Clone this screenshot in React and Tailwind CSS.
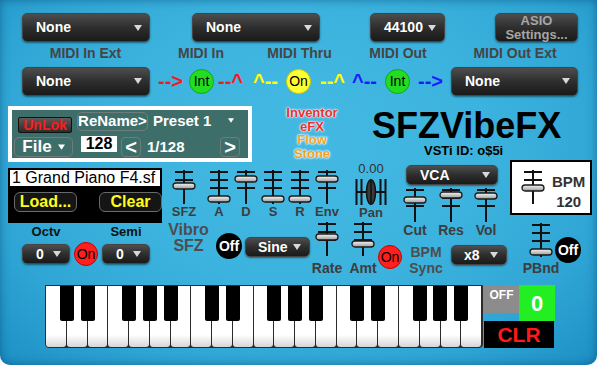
import React from "react";

function Tri({ color = "#d9d9d9", w = 8, h = 6 }) {
  return (
    <svg width={w} height={h} viewBox="0 0 8 6">
      <polygon points="0,0 8,0 4,6" fill={color} />
    </svg>
  );
}

function Drop({ label, className = "" }) {
  return (
    <div
      className={`flex items-center justify-between rounded-[5px] border border-[#454545] bg-gradient-to-b from-[#4e4e4e] via-[#2e2e2e] to-[#1a1a1a] shadow-[0_1px_2px_rgba(0,0,0,0.45)] font-bold text-white ${className}`}
    >
      <span>{label}</span>
      <Tri />
    </div>
  );
}

function Dot({ label, className = "" }) {
  return (
    <div className={`flex shrink-0 items-center justify-center rounded-full ${className}`}>
      {label}
    </div>
  );
}

function Arrow({ text, className = "" }) {
  return <span className={`text-[20px] font-bold leading-none ${className}`}>{text}</span>;
}

function Slider({ knob = 29 }) {
  return (
    <svg width="24" height="34" viewBox="0 0 24 34">
      <line x1="12" y1="0" x2="12" y2="34" stroke="#111" strokeWidth="2" />
      <line x1="3" y1="2" x2="21" y2="2" stroke="#111" strokeWidth="2" />
      <line x1="3" y1="10" x2="21" y2="10" stroke="#111" strokeWidth="2" />
      <line x1="3" y1="18" x2="21" y2="18" stroke="#111" strokeWidth="2" />
      <rect
        x="1"
        y={knob - 3}
        width="22"
        height="6"
        rx="3"
        fill="url(#knobGrad)"
        stroke="#1a1a1a"
        strokeWidth="1.3"
      />
    </svg>
  );
}

function SliderItem({ knob, label, className = "", labelCls = "text-[13px]" }) {
  return (
    <div className={`flex w-[24px] flex-col items-center ${className}`}>
      <Slider knob={knob} />
      <span className={`whitespace-nowrap font-bold leading-[16px] text-[#3d3d3d] ${labelCls}`}>
        {label}
      </span>
    </div>
  );
}

function PanKnob() {
  return (
    <svg width="32" height="26" viewBox="0 0 32 26">
      {[1.5, 6.5, 25.5, 30.5].map((x) => (
        <line key={x} x1={x} y1="0" x2={x} y2="26" stroke="#111" strokeWidth="2" />
      ))}
      <line x1="1" y1="13" x2="31" y2="13" stroke="#111" strokeWidth="2" />
      <ellipse cx="16" cy="13" rx="4.5" ry="12.3" fill="#3a3a3a" stroke="#111" strokeWidth="1.5" />
      <line x1="16" y1="2" x2="16" y2="24" stroke="#111" strokeWidth="1.5" />
    </svg>
  );
}

function Keyboard() {
  const kw = 436 / 21;
  const blacks = [];
  for (let o = 0; o < 3; o++) [1, 2, 4, 5, 6].forEach((b) => blacks.push(o * 7 + b));
  return (
    <div className="relative flex h-[63px] w-[438px] rounded-b-[4px] border border-[#2b2b2b] bg-[#2b2b2b]">
      {Array.from({ length: 21 }).map((_, i) => (
        <div
          key={i}
          className="mr-[1px] flex-1 rounded-b-[3px] bg-gradient-to-b from-white from-80% to-[#d6d6d6] last:mr-0"
        />
      ))}
      {blacks.map((b) => (
        <div
          key={b}
          className="absolute top-0 h-[35px] w-[14px] rounded-b-[2px] bg-black"
          style={{ left: b * kw - 7 }}
        />
      ))}
    </div>
  );
}

const outline = "[text-shadow:0_0_1px_#fff,0_0_2px_#fff,0_0_3px_#fff]";

export default function App() {
  return (
    <div className="h-[367px] w-[600px] bg-white font-['Liberation_Sans',Arial,sans-serif]">
      <svg width="0" height="0" className="absolute">
        <defs>
          <linearGradient id="knobGrad" x1="0" y1="0" x2="0" y2="1">
            <stop offset="0" stopColor="#f6f6f6" />
            <stop offset="1" stopColor="#9c9c9c" />
          </linearGradient>
        </defs>
      </svg>

      <div className="h-[365px] w-[597px] overflow-hidden rounded-b-[10px] bg-[radial-gradient(ellipse_at_50%_40%,#43b9e2_0%,#3cb3de_45%,#2ea5d4_75%,#1d8fc4_100%)] shadow-[inset_0_0_10px_rgba(0,60,110,0.5)]">
        {/* top row */}
        <div className="flex pl-[22px] pt-[13px]">
          <Drop label="None" className="h-[29px] w-[128px] pl-[13px] pr-[7px] text-[14px]" />
          <Drop label="None" className="ml-[42px] h-[29px] w-[128px] pl-[13px] pr-[7px] text-[14px]" />
          <Drop label="44100" className="ml-[50px] h-[29px] w-[75px] pl-[13px] pr-[8px] text-[14px]" />
          <div className="ml-[50px] flex h-[29px] w-[83px] flex-col items-center justify-center rounded-[5px] border border-[#454545] bg-gradient-to-b from-[#4e4e4e] via-[#2e2e2e] to-[#1a1a1a] text-[13px] font-bold leading-[14px] text-[#a6a6a6] shadow-[0_1px_2px_rgba(0,0,0,0.45)]">
            <span>ASIO</span>
            <span>Settings...</span>
          </div>
        </div>

        {/* midi labels */}
        <div className="flex h-[22px] items-center pl-[20px] text-[14px] font-bold text-[#454545]">
          <div className="w-[131px] text-center">MIDI In Ext</div>
          <div className="w-[100px] text-center">MIDI In</div>
          <div className="w-[97px] text-center">MIDI Thru</div>
          <div className="w-[100px] text-center">MIDI Out</div>
          <div className="w-[134px] text-center">MIDI Out Ext</div>
        </div>

        {/* routing row */}
        <div className="mt-[2px] flex h-[30px] items-center pl-[22px]">
          <Drop label="None" className="h-[29px] w-[128px] pl-[13px] pr-[7px] text-[14px]" />
          <Arrow text="-->" className="ml-[8px] text-[#f01c1c]" />
          <Dot label="Int" className="ml-[6px] h-[25px] w-[25px] border border-[#17a517] bg-[#22dd22] text-[14px] text-black" />
          <Arrow text="--^" className="ml-[4px] text-[#f01c1c]" />
          <Arrow text="^--" className="ml-[10px] text-[#ffff00]" />
          <Dot label="On" className="ml-[8px] h-[25px] w-[25px] border border-[#cccc00] bg-[#ffff33] text-[14px] text-black" />
          <Arrow text="--^" className="ml-[9px] text-[#ffff00]" />
          <Arrow text="^--" className="ml-[7px] text-[#1a1aff]" />
          <Dot label="Int" className="ml-[8px] h-[25px] w-[25px] border border-[#17a517] bg-[#22dd22] text-[14px] text-black" />
          <Arrow text="-->" className="ml-[8px] text-[#1a1aff]" />
          <Drop label="None" className="ml-[8px] h-[29px] w-[127px] pl-[13px] pr-[7px] text-[14px]" />
        </div>

        {/* preset / title row */}
        <div className="mt-[10px] flex h-[54px] items-start pl-[8px]">
          <div className="flex h-[56px] w-[244px] shrink-0 flex-col border-4 border-white bg-[#3e6e6a] text-white">
            <div className="flex h-[24px] items-start">
              <div className="ml-[6px] mt-[7px] flex h-[16px] w-[54px] items-center justify-center rounded-[2px] border border-[#111] bg-gradient-to-b from-[#5c5c5c] to-[#2c2c2c] text-[14px] font-bold leading-none text-[#ff1a1a]">
                UnLok
              </div>
              <div className="ml-[5px] mt-[2px] flex h-[19px] w-[71px] items-center justify-center rounded-[5px] border border-[#6f7d7a] text-[15px] font-bold">
                ReName&gt;
              </div>
              <div className="ml-[5px] mt-[2px] flex h-[19px] w-[75px] items-center text-[15px] font-bold">
                Preset 1
              </div>
              <div className="mt-[8px] flex">
                <Tri color="#ffffff" w={6} h={5} />
              </div>
            </div>
            <div className="flex h-[24px] items-start">
              <div className="ml-[2px] mt-[3px] flex h-[20px] w-[59px] items-center justify-center gap-[6px] rounded-[5px] border border-[#6f7d7a] text-[17px] font-bold">
                <span>File</span>
                <Tri color="#ffffff" w={7} h={6} />
              </div>
              <div className="ml-[8px] mt-[2px] flex h-[16px] w-[36px] items-center justify-center bg-white text-[16px] font-bold text-black">
                128
              </div>
              <div className="ml-[4px] mt-[3px] flex h-[20px] w-[20px] items-center justify-center rounded-[4px] border border-[#6f7d7a] text-[20px] font-bold leading-none">
                &lt;
              </div>
              <div className="ml-[6px] mt-[3px] flex h-[20px] items-center text-[15px] font-bold">1/128</div>
              <div className="ml-auto mr-[8px] mt-[3px] flex h-[20px] w-[20px] items-center justify-center rounded-[4px] border border-[#6f7d7a] text-[20px] font-bold leading-none">
                &gt;
              </div>
            </div>
          </div>

          <div className={`flex w-[120px] shrink-0 flex-col items-center text-[13px] font-bold leading-[13.5px] ${outline}`}>
            <span className="text-[#e8302c]">Inventor</span>
            <span className="text-[#e8302c]">eFX</span>
            <span className="text-[#f0a428]">Flow</span>
            <span className="text-[#f0a020]">Stone</span>
          </div>

          <div className="flex flex-col">
            <span className="mt-[3px] whitespace-nowrap text-[36px] font-bold leading-[34px] text-black">SFZVibeFX</span>
            <span className="ml-[52px] mt-[1px] whitespace-nowrap text-[13px] font-bold leading-[13px] text-black">VSTi ID: o$5i</span>
          </div>
        </div>

        {/* controls */}
        <div className="flex h-[125px] pl-[8px]">
          {/* sample + octave */}
          <div className="flex w-[154px] shrink-0 flex-col">
            <div className="mt-[8px] flex h-[55px] flex-col bg-black">
              <div className="mx-[2px] mt-[2px] h-[16px] overflow-hidden whitespace-nowrap bg-white pl-[2px] text-[16px] leading-[16px] text-black">
                1 Grand Piano F4.sf
              </div>
              <div className="mt-[6px] flex gap-[22px] pl-[6px]">
                <div className="flex h-[20px] w-[64px] items-center justify-center rounded-[6px] border border-[#6a6a6a] bg-[#151515] text-[16px] font-bold text-[#ffff1a]">
                  Load...
                </div>
                <div className="flex h-[20px] w-[64px] items-center justify-center rounded-[6px] border border-[#6a6a6a] bg-[#151515] text-[16px] font-bold text-[#ffff1a]">
                  Clear
                </div>
              </div>
            </div>
            <div className="flex h-[18px] items-center text-[13px] font-bold text-[#111]">
              <div className="w-[76px] text-center">Octv</div>
              <div className="ml-[6px] w-[72px] text-center">Semi</div>
            </div>
            <div className="mt-[1px] flex h-[24px] items-center pl-[14px]">
              <Drop label="0" className="h-[20px] w-[48px] pl-[13px] pr-[8px] text-[14px]" />
              <Dot label="On" className="ml-[4px] h-[24px] w-[24px] border border-[#c40000] bg-[#ff1f1f] text-[14px] text-black" />
              <Drop label="0" className="ml-[4px] h-[20px] w-[48px] pl-[13px] pr-[8px] text-[14px]" />
            </div>
          </div>

          {/* envelope / vibro */}
          <div className="flex w-[240px] shrink-0 flex-col">
            <div className="flex h-[62px] items-start">
              <SliderItem knob={16} label="SFZ" className="ml-[10px] mt-[10px]" />
              <SliderItem knob={29} label="A" className="ml-[11px] mt-[10px]" />
              <SliderItem knob={9} label="D" className="ml-[3px] mt-[10px]" />
              <SliderItem knob={29} label="S" className="ml-[3px] mt-[10px]" />
              <SliderItem knob={29} label="R" className="ml-[3px] mt-[10px]" />
              <SliderItem knob={9} label="Env" className="ml-[3px] mt-[10px]" />
              <div className="ml-[16px] mt-[2px] flex w-[32px] flex-col items-center">
                <span className="text-[13px] leading-[14px] text-[#333]">0.00</span>
                <div className="mt-[3px] flex">
                  <PanKnob />
                </div>
                <span className="text-[13px] font-bold leading-[16px] text-[#3d3d3d]">Pan</span>
              </div>
            </div>
            <div className="flex h-[53px] items-start">
              <div className="ml-[6px] w-[41px] text-center text-[16px] font-bold leading-[16px] text-[#4d4d4d]">
                Vibro
                <br />
                SFZ
              </div>
              <Dot label="Off" className="ml-[7px] mt-[11px] h-[26px] w-[26px] bg-black text-[14px] font-bold text-white" />
              <Drop label="Sine" className="ml-[3px] mt-[15px] h-[20px] w-[65px] pl-[12px] pr-[8px] text-[14px]" />
              <SliderItem knob={15} label="Rate" className="ml-[5px]" labelCls="text-[14px] mt-[4px]" />
              <SliderItem knob={22} label="Amt" className="ml-[12px]" labelCls="text-[14px] mt-[4px]" />
              <Dot label="On" className="ml-[3px] mt-[23px] h-[24px] w-[24px] border border-[#c40000] bg-[#ff1f1f] text-[14px] text-black" />
            </div>
          </div>

          {/* filter */}
          <div className="flex w-[108px] shrink-0 flex-col">
            <Drop label="VCA" className="ml-[4px] mt-[5px] h-[20px] w-[92px] pl-[13px] pr-[7px] text-[14px]" />
            <div className="mt-[3px] flex">
              <SliderItem knob={12} label="Cut" className="ml-[1px]" labelCls="text-[14px]" />
              <SliderItem knob={7} label="Res" className="ml-[12px]" labelCls="text-[14px]" />
              <SliderItem knob={8} label="Vol" className="ml-[11px]" labelCls="text-[14px]" />
            </div>
            <div className="mt-[6px] flex items-start">
              <div className="ml-[7px] w-[34px] text-center text-[14px] font-bold leading-[16px] text-[#4d4d4d]">
                BPM
                <br />
                Sync
              </div>
              <Drop label="x8" className="ml-[8px] mt-[1px] h-[20px] w-[56px] pl-[12px] pr-[8px] text-[14px]" />
            </div>
          </div>

          {/* bpm / pitch bend */}
          <div className="flex flex-col">
            <div className="flex h-[55px] w-[82px] items-start border-2 border-black bg-white">
              <div className="ml-[9px] mt-[8px] flex">
                <Slider knob={18} />
              </div>
              <div className="ml-[7px] mt-[10px] text-center text-[15px] font-bold leading-[20px] text-[#333]">
                BPM
                <br />
                120
              </div>
            </div>
            <div className="flex items-start">
              <SliderItem knob={29} label="PBnd" className="ml-[19px] mt-[8px]" labelCls="text-[14px] mt-[3px]" />
              <Dot label="Off" className="ml-[2px] mt-[22px] h-[26px] w-[26px] bg-black text-[14px] font-bold text-white" />
            </div>
          </div>
        </div>

        {/* keyboard */}
        <div className="flex pl-[45px]">
          <Keyboard />
          <div className="ml-[1px] flex w-[71px] flex-col">
            <div className="flex h-[36px]">
              <div className="h-[28px] w-[35px] bg-[#8c8c8c] pt-[2px] text-center text-[12px] font-bold leading-[16px] text-white">
                OFF
              </div>
              <div className="flex h-[36px] w-[36px] items-center justify-center bg-[#22ee22] text-[22px] font-bold text-white">
                0
              </div>
            </div>
            <div className="flex h-[27px] w-[70px] items-center justify-center bg-black text-[21px] font-bold text-[#ff1a1a]">
              CLR
            </div>
          </div>
        </div>
      </div>
    </div>
  );
}
